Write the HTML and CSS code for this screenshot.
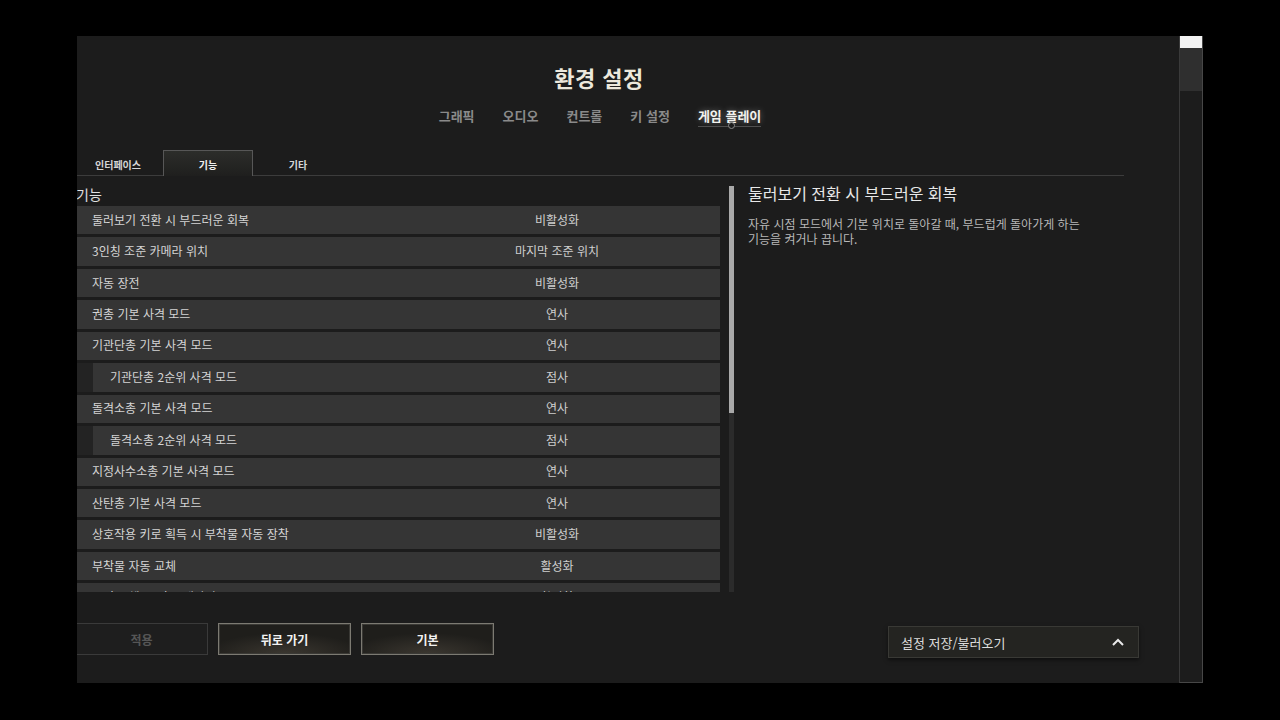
FILE: index.html
```html
<!DOCTYPE html>
<html lang="ko">
<head>
<meta charset="utf-8">
<title>환경 설정</title>
<link rel="stylesheet" href="styles.css">
</head>
<body>
<div class="frame">
  <div class="panel">
    <header class="header">
      <h1 class="title">환경 설정</h1>
      <nav class="tabs">
        <span class="tab">그래픽</span>
        <span class="tab">오디오</span>
        <span class="tab">컨트롤</span>
        <span class="tab">키 설정</span>
        <span class="tab tab-active">게임 플레이</span>
      </nav>
    </header>
    <div class="subtabs">
      <span class="subtab">인터페이스</span>
      <span class="subtab subtab-active">기능</span>
      <span class="subtab">기타</span>
    </div>
    <div class="content">
      <div class="list-wrap">
        <div class="section-label">기능</div>
        <div class="row"><span class="label">둘러보기 전환 시 부드러운 회복</span><span class="value">비활성화</span></div>
        <div class="row"><span class="label">3인칭 조준 카메라 위치</span><span class="value">마지막 조준 위치</span></div>
        <div class="row"><span class="label">자동 장전</span><span class="value">비활성화</span></div>
        <div class="row"><span class="label">권총 기본 사격 모드</span><span class="value">연사</span></div>
        <div class="row"><span class="label">기관단총 기본 사격 모드</span><span class="value">연사</span></div>
        <div class="row-outer"><div class="row row-sub"><span class="label">기관단총 2순위 사격 모드</span><span class="value">점사</span></div></div>
        <div class="row"><span class="label">돌격소총 기본 사격 모드</span><span class="value">연사</span></div>
        <div class="row-outer"><div class="row row-sub"><span class="label">돌격소총 2순위 사격 모드</span><span class="value">점사</span></div></div>
        <div class="row"><span class="label">지정사수소총 기본 사격 모드</span><span class="value">연사</span></div>
        <div class="row"><span class="label">산탄총 기본 사격 모드</span><span class="value">연사</span></div>
        <div class="row"><span class="label">상호작용 키로 획득 시 부착물 자동 장착</span><span class="value">비활성화</span></div>
        <div class="row"><span class="label">부착물 자동 교체</span><span class="value">활성화</span></div>
        <div class="row"><span class="label">무기 교체 시 자동 재장전</span><span class="value">활성화</span></div>
      </div>
      <div class="list-scroll"><div class="list-thumb"></div></div>
      <div class="desc">
        <h2 class="desc-title">둘러보기 전환 시 부드러운 회복</h2>
        <p class="desc-text">자유 시점 모드에서 기본 위치로 돌아갈 때, 부드럽게 돌아가게 하는<br>기능을 켜거나 끕니다.</p>
      </div>
    </div>
    <footer class="footer">
      <div class="buttons">
        <button class="btn btn-disabled">적용</button>
        <button class="btn">뒤로 가기</button>
        <button class="btn">기본</button>
      </div>
      <div class="dropdown">
        <span>설정 저장/불러오기</span>
        <svg class="chev" width="12" height="8" viewBox="0 0 12 8"><path d="M1 7 L6 2 L11 7" fill="none" stroke="#e8e8e8" stroke-width="2"/></svg>
      </div>
    </footer>
  </div>
  <div class="vscroll">
    <div class="vs-top"></div>
    <div class="vs-thumb"></div>
  </div>
</div>
</body>
</html>
```
FILE: styles.css
```css
* { box-sizing: border-box; }
html, body { margin: 0; padding: 0; background: #000; }
body {
  width: 1280px; height: 720px; overflow: hidden;
  padding: 36px 0 0 77px;
  font-family: "Noto Sans CJK KR", "Noto Sans", sans-serif;
}
.frame { display: flex; width: 1126px; height: 647px; }
.panel {
  width: 1102px; height: 647px; background: #1c1c1c;
  overflow: hidden; padding-top: 26px;
}
.header { width: 1044px; text-align: center; }
.title {
  margin: 0; font-size: 22px; line-height: 30px; font-weight: 700;
  color: #ece8dc; letter-spacing: 0.5px;
}
.tabs {
  margin-top: 14px; display: flex; justify-content: center; gap: 28px;
  height: 20px; padding-left: 2px;
}
.tab {
  font-size: 13px; line-height: 20px; font-weight: 700; color: #8a8a8a;
  position: relative;
}
.tab-active { color: #f2f2ee; text-shadow: 0 0 6px rgba(255,255,255,0.35); }
.tab-active::after {
  content: ""; position: absolute; left: 0; right: 0; bottom: -1px;
  height: 1px; background: #4f4f4f;
}
.tab-active::before {
  content: ""; position: absolute; left: 50%; bottom: -3px; margin-left: -2px;
  width: 5px; height: 5px; border-radius: 50%; background: #1c1c1c;
  border: 1px solid #8a8a8a; z-index: 1;
}
.subtabs {
  margin-top: 24px; margin-left: -4px; width: 1051px; height: 26px;
  display: flex; border-bottom: 1px solid #3c3c3c;
}
.subtab {
  width: 90px; height: 25px; text-align: center; font-size: 10px;
  line-height: 29px; font-weight: 700; color: #d6d6d6;
}
.subtab-active {
  border: 1px solid #575757; border-bottom: none;
  background: linear-gradient(180deg, #2c2d2a 0%, #1f1f1e 100%);
  color: #f0f0f0; line-height: 28px; height: 26px; margin-bottom: -1px;
}
.content { margin-top: 10px; height: 406px; display: flex; }
.list-wrap { width: 643px; height: 406px; overflow: hidden; }
.section-label {
  margin-left: -1px; height: 20px; font-size: 14px; line-height: 16px; color: #e0e0e0;
}
.row {
  height: 28.45px; margin-bottom: 3px; background: #353535;
  display: flex; align-items: center; font-size: 12px; color: #d4d4d4;
  padding-left: 15px; padding-bottom: 2px;
}
.row-outer { background: #232323; padding-left: 16px; margin-bottom: 3px; }
.row-outer .row { margin-bottom: 0; padding-left: 17px; }
.label { flex: 1; }
.value { width: 326px; text-align: center; color: #cfcfcf; }
.list-scroll {
  margin-left: 9px; width: 5px; height: 406px; background: #2b2b2b;
}
.list-thumb { height: 227px; background: #a9a9a9; }
.desc { margin-left: 14px; width: 360px; }
.desc-title {
  margin: -3px 0 0; font-size: 16px; line-height: 20px; font-weight: 400; color: #e8e8e8;
}
.desc-text {
  margin: 13px 0 0; font-size: 12px; line-height: 15px; color: #b8b8b8;
}
.footer {
  margin-top: 31px; display: flex; justify-content: space-between;
  align-items: flex-start; padding-right: 40px;
}
.buttons { display: flex; gap: 10px; margin-left: -2px; }
.btn {
  width: 133px; height: 32px; font-family: inherit; font-size: 12px; font-weight: 700;
  color: #f2f2f2; border: 1px solid #7c7a72;
  box-shadow: inset 0 0 0 1px #3a3935;
  background: radial-gradient(ellipse 60% 70% at 50% 100%, #3b3730 0%, #1f1e1b 100%);
  padding: 0;
}
.btn-disabled {
  color: #565656; border-color: #3a3a3a; box-shadow: none;
  background: #1e1e1e;
}
.dropdown {
  margin-top: 3px; width: 251px; height: 32px; background: #242421;
  border: 1px solid #393935; box-shadow: 0 2px 4px rgba(0,0,0,0.5);
  display: flex; align-items: center; justify-content: space-between;
  padding: 0 14px 0 12px; font-size: 13px; color: #dcdcdc;
}
.vscroll {
  width: 24px; height: 647px; background: #1c1c1c;
  border-left: 1px solid #3a3a3a; border-right: 1px solid #474747;
  border-bottom: 1px solid #474747;
}
.vs-top { height: 12px; background: #f2f2f2; }
.vs-thumb { height: 43px; background: #2f2f2f; }
```
